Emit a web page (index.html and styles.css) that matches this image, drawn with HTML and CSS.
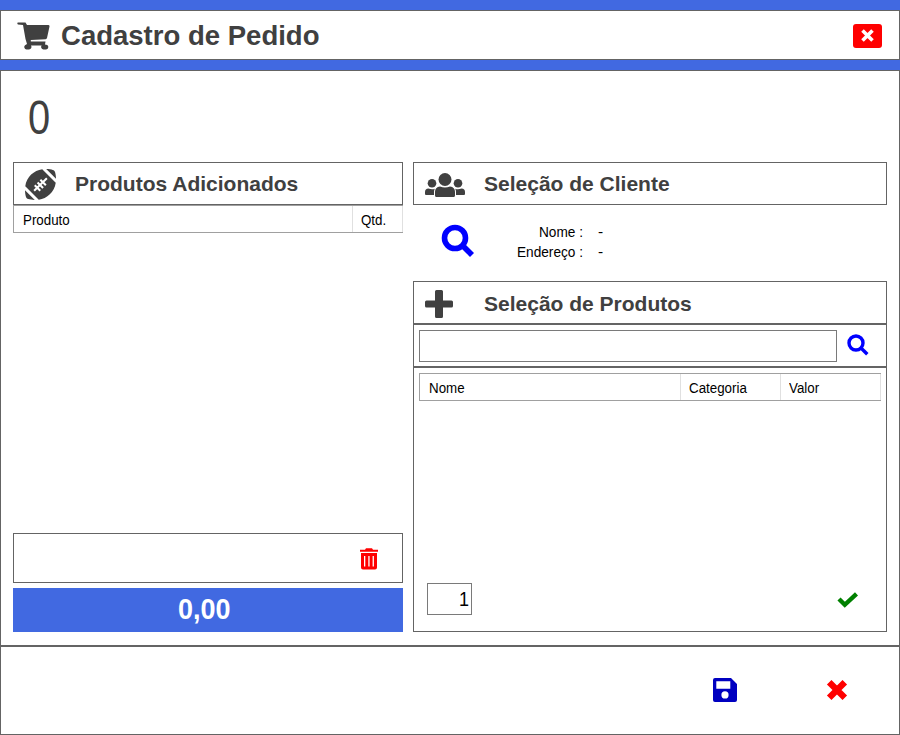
FILE: index.html
```
<!DOCTYPE html>
<html lang="pt-BR">
<head>
<meta charset="utf-8">
<title>Cadastro de Pedido</title>
<link rel="stylesheet" href="styles.css">
</head>
<body>
<div class="window">
  <header class="titlebar">
    <svg class="cart" width="34" height="28" viewBox="0 0 34 28"><path d="M.3 1Q.3 .4 1 .4H8.500L10 3H31.500Q32.800 3 32.500 4.500L30 16Q29.700 17 28.700 17.200L13.800 18V19.500H28.500L28 22.500L30.300 23A2.500 2.500 0 0 1 29 27.500H26.500A2.500 2.500 0 0 1 24.600 23.500H14A2.500 2.500 0 0 1 12 27.500H9.500A2.500 2.500 0 0 1 8 23.200L10 22L8.500 17L6 3L1 2.500Q.3 2.400 .3 1Z"/></svg>
    <h1><span>Cadastro de Pedido</span></h1>
    <button class="close" aria-label="Fechar"><svg width="13" height="13" viewBox="0 0 13 13"><path d="M1.500 1.500L11.500 11.500M11.500 1.500L1.500 11.500"/></svg></button>
  </header>
  <main class="body">
    <div class="number"><span>0</span></div>
    <div class="columns">
      <section class="left">
        <div class="heading">
          <svg width="31" height="31" viewBox="0 8 496 496"><path fill-rule="evenodd" d="M481.500 60.300c-4.800-18.200-19.100-32.500-37.300-37.400C420.300 16.500 383 8.900 339.400 8L496 164.800c-.8-43.500-8.200-80.600-14.500-104.500zM14.500 451.700c4.800 18.200 19.100 32.500 37.300 37.400 23.900 6.400 61.200 14 104.800 14.900L0 347.200c.8 43.500 8.200 80.600 14.500 104.500zM4.200 283.400L220.400 500c132.500-19.400 248.800-118.700 271.500-271.400L275.600 12C143.100 31.400 26.800 130.700 4.200 283.400z"/><path class="lace" d="M146 356L350 156M156 269L244 357M201 224L289 312M246 179L334 267"/></svg>
          <h2>Produtos Adicionados</h2>
        </div>
        <div class="grid-head added"><div><span>Produto</span></div><div><span>Qtd.</span></div></div>
        <div class="remove"><svg width="20" height="22" viewBox="0 0 20 22"><path fill-rule="evenodd" d="M1 1.700H6L7 .3H13L14 1.700H19V3.700H1ZM2 5H18V19.500Q18 21.500 16 21.500H4Q2 21.500 2 19.500ZM5 8V18.500H6.300V8ZM9.300 8V18.500H10.600V8ZM13.600 8V18.500H14.900V8Z"/></svg></div>
        <div class="total"><span>0,00</span></div>
      </section>
      <section class="right">
        <div class="heading">
          <svg width="40" height="24" viewBox="0 0 40 24"><circle cx="20" cy="6.500" r="6.500"/><circle cx="7" cy="10.300" r="4.300"/><circle cx="33" cy="10.300" r="4.300"/><path d="M10 22.500V19Q10 14 15 13.500Q20 15.500 25 13.500Q30 14 30 19V22.500Q30 24 28.500 24H11.500Q10 24 10 22.500ZM0 21V19Q0 15.500 3.500 15.500Q7 17 9.800 15.700Q9 17 9 19V22H1Q0 22 0 21ZM31 22V19Q31 17 30.200 15.700Q33 17 36.500 15.500Q40 15.500 40 19V21Q40 22 39 22Z"/></svg>
          <h2>Seleção de Cliente</h2>
        </div>
        <div class="client">
          <svg class="search" width="34" height="34" viewBox="0 0 34 34"><circle cx="14" cy="14" r="10.500"/><path d="M21.500 21.500L31 31"/></svg>
          <dl><dt><span>Nome :</span></dt><dd>-</dd><dt><span>Endereço :</span></dt><dd>-</dd></dl>
        </div>
        <div class="heading joined">
          <svg width="28" height="28" viewBox="0 0 28 28"><path d="M11.500 0H16.500Q18 0 18 1.500V10.500H26.500Q28 10.500 28 12V16Q28 17.500 26.500 17.500H18V26.500Q18 28 16.500 28H11.500Q10 28 10 26.500V17.500H1.500Q0 17.500 0 16V12Q0 10.500 1.500 10.500H10V1.500Q10 0 11.500 0Z"/></svg>
          <h2>Seleção de Produtos</h2>
        </div>
        <div class="search-row"><input type="text" aria-label="Buscar produto"><svg class="search small" width="22" height="22" viewBox="0 0 22 22"><circle cx="9" cy="9" r="7"/><path d="M14 14L20.300 20.300"/></svg></div>
        <div class="products">
          <div class="grid-head catalog"><div><span>Nome</span></div><div><span>Categoria</span></div><div><span>Valor</span></div></div>
          <div class="add-row"><div class="quantity"><span>1</span></div><svg width="22" height="16" viewBox="0 0 22 16"><path d="M2 7L7.800 12.800L19.500 1.800"/></svg></div>
        </div>
      </section>
    </div>
  </main>
  <footer class="actions">
    <svg class="save" width="24" height="24" viewBox="0 0 24 24"><path fill-rule="evenodd" d="M2 0H18L24 6V22Q24 24 22 24H2Q0 24 0 22V2Q0 0 2 0ZM3.300 3.300V10.700H17.300V3.300ZM12 13.300A3.600 3.600 0 1 0 12 20.500A3.600 3.600 0 1 0 12 13.300Z"/></svg>
    <svg class="cancel" width="22" height="22" viewBox="0 0 22 22"><path d="M3.200 3.200L18.800 18.800M18.800 3.200L3.200 18.800"/></svg>
  </footer>
</div>
</body>
</html>
```
FILE: styles.css
```
* { box-sizing: border-box; }
body { margin: 0; background: #fff; font-family: "Liberation Sans", Arial, sans-serif; color: #000; }
h1, h2, dl, dd { margin: 0; }
svg { display: block; flex: none; }
.window { width: 900px; height: 735px; padding-top: 10px; display: flex; flex-direction: column; background: #4169e1; overflow: hidden; }

.titlebar { height: 50px; margin-bottom: 10px; flex: none; display: flex; align-items: center; padding: 0 17px 0 16px; background: #fff; border: 1px solid #646464; }
.cart { fill: #404040; margin-top: 2px; }
h1 { flex: 1; margin: 2px 0 0 10px; font-size: 28px; line-height: 32px; color: #404040; }
h1 span, .number span, .grid-head span, dt span, .total span, .quantity span { display: inline-block; transform-origin: left center; }
h1 span { transform: scaleX(.983); }
.close { width: 29px; height: 24px; margin-top: 1px; padding: 0; border: 0; border-radius: 3px; background: #f00; display: flex; align-items: center; justify-content: center; }
.close path { fill: none; stroke: #fff; stroke-width: 3.6; }

.body { height: 576px; flex: none; padding: 20px 12px 0; background: #fff; border: 1px solid #646464; }
.number { height: 71px; padding-left: 15px; font-size: 48px; line-height: 54px; color: #404040; }
.number span { transform: scaleX(.83); }
.columns { display: grid; grid-template-columns: 390px 474px; column-gap: 10px; height: 470px; }
.left, .right { display: flex; flex-direction: column; }

.heading { height: 43px; flex: none; display: flex; align-items: center; padding-left: 11px; border: 1px solid #646464; }
.heading svg { fill: #404040; margin-top: 2px; }
.lace { stroke: #fff; stroke-width: 33; }
h2 { font-size: 21px; line-height: 24px; color: #404040; }
.left h2 { margin-left: 19px; }
.right h2 { margin-left: 19px; }
.right .joined h2 { margin: 2px 0 0 31px; }

.grid-head { display: grid; height: 28px; flex: none; border: 1px solid #a0a0a0; border-right: 0; font-size: 15.5px; line-height: 28px; }
.grid-head div { height: 26px; padding-left: 8px; border-right: 1px solid #e0e0e0; }
.grid-head span { transform: scaleX(.86); }
.added { grid-template-columns: 339px 50px; }
.added div:first-child { padding-left: 9px; }
.catalog { grid-template-columns: 261px 100px 100px; }
.catalog div:first-child { padding-left: 9px; }
.remove { height: 50px; margin-top: auto; border: 1px solid #646464; display: flex; justify-content: flex-end; align-items: center; padding-right: 23px; }
.remove svg { fill: #f00; margin-top: 1px; }
.total { height: 44px; margin-top: 5px; background: #4169e1; color: #fff; font-size: 29px; font-weight: bold; line-height: 43px; text-align: center; padding-right: 7px; }
.total span { transform: scaleX(.93); transform-origin: center; }

.client { height: 76px; flex: none; display: flex; align-items: flex-start; padding: 19px 0 0 28px; }
.search { fill: none; stroke: #00f; stroke-width: 5.6; }
.small { stroke-width: 3.4; }
.search-row .small { margin: 0 0 2px; }
dl { display: grid; grid-template-columns: 108px 20px; column-gap: 15px; font-size: 15.5px; line-height: 20px; margin-top: -2px; }
dt { text-align: right; }
dt span { transform: scaleX(.88); transform-origin: right center; }
.search-row { height: 43px; flex: none; display: flex; align-items: center; gap: 10px; padding-left: 5px; border: 1px solid #646464; }
input { width: 418px; height: 32px; margin: 0; padding: 0 6px; border: 1px solid #7a7a7a; background: #fff; font: 20px "Liberation Sans", sans-serif; }
.products { height: 265px; flex: none; padding: 5px 5px 0; border: 1px solid #646464; display: flex; flex-direction: column; }
.add-row { margin: auto 22px 16px 8px; display: flex; justify-content: space-between; align-items: center; }
.quantity { width: 45px; height: 32px; border: 1px solid #7a7a7a; padding-right: 2px; text-align: right; font-size: 20px; line-height: 30px; }
.quantity span { transform: scaleX(.9); transform-origin: right; }
.add-row svg { margin-top: 2px; }
.add-row path { fill: none; stroke: green; stroke-width: 4.4; }

.actions { height: 89px; flex: none; display: flex; align-items: center; justify-content: flex-end; gap: 89px; padding: 0 51px 2px 0; background: #fff; border: 1px solid #646464; }
.save { fill: #0000c0; }
.cancel path { fill: none; stroke: #f00; stroke-width: 6.4; }
```
